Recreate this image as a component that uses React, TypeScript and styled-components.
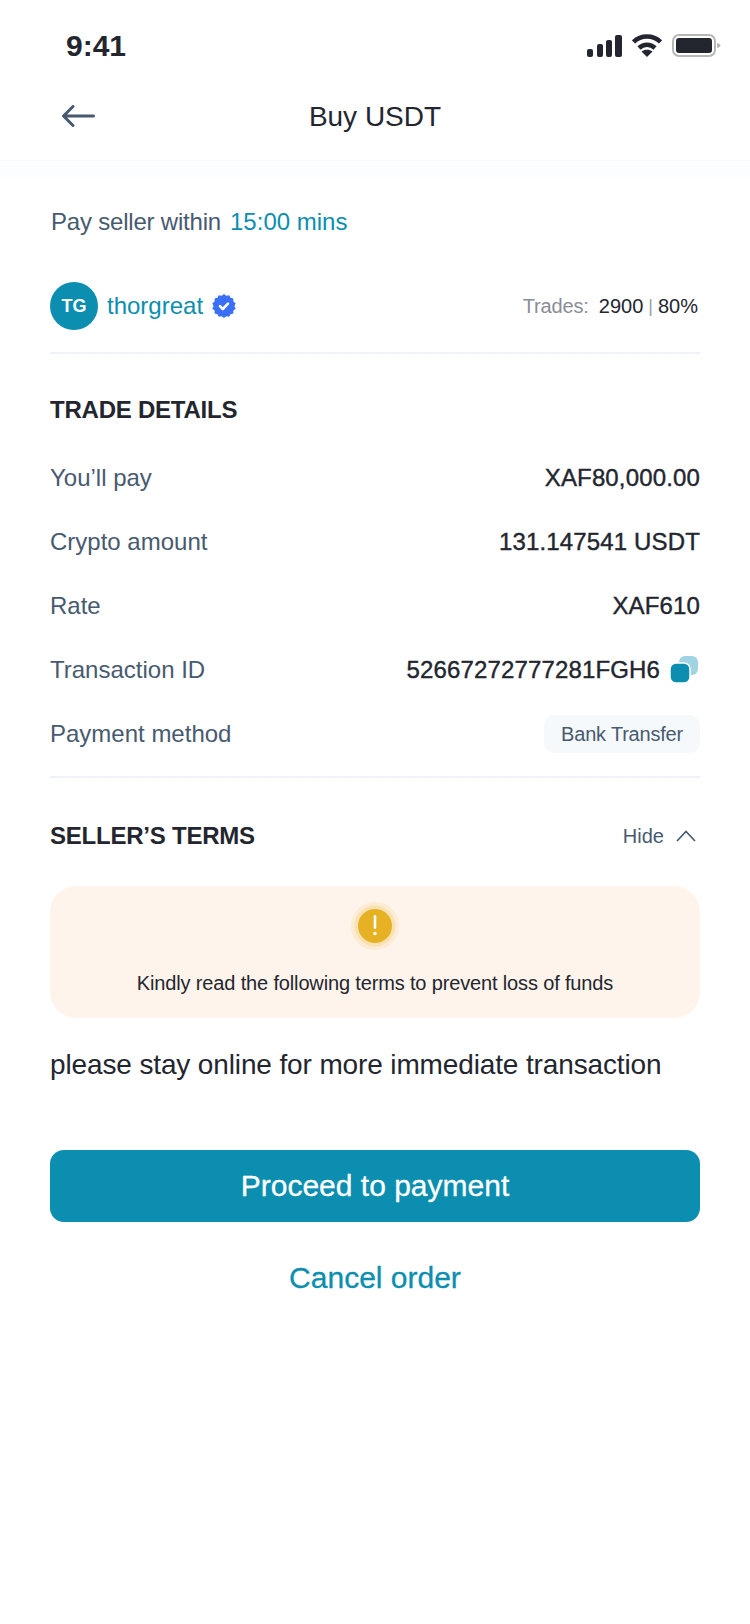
import React from "react";
import styled, {createGlobalStyle} from "styled-components";

const teal = "#0b8eaf";
const ink = "#23262f";
const slate = "#475a70";

const GlobalStyle = createGlobalStyle`
    html, body {
        margin: 0;
        padding: 0;
        background: #fff;
    }

    body {
        font-family: "Liberation Sans", Arial, sans-serif;
        color: ${ink};
    }
`;

const Page = styled.div`
    width: 750px;
    height: 1624px;
    overflow: hidden;
    background: #fff;
`;

const StatusBar = styled.div`
    display: flex;
    align-items: center;
    justify-content: space-between;
    height: 72px;
    padding: 20px 29px 0 66px;
    box-sizing: border-box;
`;

const Clock = styled.span`
    font-size: 30px;
    font-weight: 700;
`;

const StatusIcons = styled.div`
    display: flex;
    align-items: flex-end;
    gap: 10px;
    margin-bottom: 2px;
`;

const NavBar = styled.div`
    display: grid;
    grid-template-columns: 1fr auto 1fr;
    align-items: center;
    height: 88px;
    padding-left: 62px;
`;

const Title = styled.h1`
    margin: 2px 0 0 -62px;
    font-size: 28px;
    font-weight: 400;
`;

const NavBand = styled.div`
    height: 17px;
    background: #fcfdfe;
    border-top: 1px solid #f4f7fb;
    box-sizing: border-box;
`;

const Content = styled.main`
    padding: 0 50px;
`;

const Timer = styled.div`
    display: flex;
    gap: 9px;
    align-items: center;
    height: 44px;
    margin-top: 23px;
    padding-left: 1px;
    font-size: 24px;
    letter-spacing: -0.2px;
    color: ${slate};
`;

const TimerValue = styled.span`
    color: ${teal};
    letter-spacing: 0;
`;

const SellerRow = styled.div`
    display: flex;
    align-items: center;
    justify-content: space-between;
    margin-top: 38px;
    padding-bottom: 22px;
    border-bottom: 2px solid #eef2f6;
`;

const Seller = styled.div`
    display: flex;
    align-items: center;
`;

const Avatar = styled.div`
    display: flex;
    align-items: center;
    justify-content: center;
    width: 48px;
    height: 48px;
    border-radius: 50%;
    background: ${teal};
    color: #fff;
    font-size: 18px;
    font-weight: 700;
`;

const SellerName = styled.span`
    margin: 0 9px 0 9px;
    font-size: 24px;
    color: ${teal};
`;

const TradeStats = styled.div`
    display: flex;
    align-items: center;
    padding-right: 2px;
    font-size: 20px;
`;

const TradesLabel = styled.span`
    margin-right: 10px;
    color: #8a8d96;
    letter-spacing: -0.15px;
`;

const StatsSeparator = styled.span`
    margin: 0 5px;
    color: #9a9da5;
    font-size: 18px;
`;

const SectionHeading = styled.h2`
    margin: 0;
    font-size: 24px;
    line-height: 30px;
    font-weight: 700;
    letter-spacing: -0.23px;
`;

const DetailsHeading = styled(SectionHeading)`
    margin-top: 41px;
`;

const Details = styled.div`
    margin-top: 21px;
    padding-bottom: 10px;
    border-bottom: 2px solid #eef2f6;
`;

const DetailRow = styled.div`
    display: flex;
    align-items: center;
    justify-content: space-between;
    height: 64px;
    font-size: 24px;
`;

const DetailLabel = styled.span`
    color: ${slate};
`;

const DetailValue = styled.span`
    display: flex;
    align-items: center;
    gap: 10px;
    letter-spacing: 0.15px;
    -webkit-text-stroke: 0.4px ${ink};
`;

const MethodChip = styled.span`
    display: flex;
    align-items: center;
    height: 38px;
    padding: 0 17px;
    border-radius: 10px;
    background: #f6f9fc;
    color: ${slate};
    font-size: 20px;
    letter-spacing: -0.2px;
`;

const TermsHeader = styled.div`
    display: flex;
    align-items: center;
    justify-content: space-between;
    margin-top: 43px;
`;

const HideToggle = styled.span`
    display: flex;
    align-items: center;
    gap: 12px;
    padding-right: 4px;
    color: ${slate};
    font-size: 20px;
`;

const WarningBox = styled.div`
    display: flex;
    flex-direction: column;
    align-items: center;
    height: 132px;
    margin-top: 35px;
    padding-top: 16px;
    box-sizing: border-box;
    border-radius: 26px;
    background: #fff4eb;
`;

const WarningText = styled.p`
    margin: 19px 0 0;
    font-size: 20px;
    line-height: 28px;
    letter-spacing: -0.15px;
`;

const TermsText = styled.p`
    margin: 29px 0 0;
    font-size: 28px;
    line-height: 36px;
    letter-spacing: -0.13px;
`;

const PrimaryButton = styled.button`
    display: block;
    width: 100%;
    height: 72px;
    margin-top: 67px;
    border: 0;
    border-radius: 14px;
    background: ${teal};
    color: #fff;
    font: inherit;
    font-size: 30px;
    -webkit-text-stroke: 0.3px #fff;
`;

const CancelButton = styled.button`
    display: block;
    width: 100%;
    height: 40px;
    margin-top: 36px;
    padding: 0;
    border: 0;
    background: none;
    color: ${teal};
    font: inherit;
    font-size: 30px;
    -webkit-text-stroke: 0.3px ${teal};
`;

const CopyWrap = styled.span`
    display: flex;
    margin-right: 2px;
`;

const SignalIcon = () => (
    <svg width="35" height="22" viewBox="0 0 35 22" fill={ink}>
        <rect x="0" y="14" width="6" height="8" rx="2"/>
        <rect x="10" y="9" width="6" height="13" rx="2"/>
        <rect x="19" y="5" width="6" height="17" rx="2"/>
        <rect x="28" y="0" width="7" height="22" rx="2"/>
    </svg>
);

const WifiIcon = () => (
    <svg width="30" height="23" viewBox="0 0 30 23" fill="none" stroke={ink} strokeWidth="4.500">
        <path d="M1.5 8C9 .8 21 .8 28.5 8"/>
        <path d="M7 14c4.500-4.300 11.500-4.300 16 0"/>
        <path d="M15 23l-5.500-5.500c3-2.500 8-2.500 11 0z" fill={ink} stroke="none"/>
    </svg>
);

const BatteryIcon = () => (
    <svg width="49" height="23" viewBox="0 0 49 23">
        <rect x="1" y="1" width="42" height="21" rx="6" fill="none" stroke="#b7b7b7" strokeWidth="2"/>
        <rect x="4" y="4" width="36" height="15" rx="3" fill={ink}/>
        <path d="M45 9c2 .5 3.500 1.300 3.500 2.500S47 13.500 45 14z" fill="#b7b7b7"/>
    </svg>
);

const BackIcon = () => (
    <svg width="33" height="22" viewBox="0 0 33 22" fill="none" stroke={slate} strokeWidth="3" strokeLinecap="round" strokeLinejoin="round">
        <path d="M11 1.500L1.500 11l9.500 9.500M2 11h29.500"/>
    </svg>
);

// scalloped edge of the verified badge
const badgeEdge = Array.from({length: 28}, (_, i) => {
    const angle = (i / 28) * Math.PI * 2;
    const radius = i % 2 === 0 ? 12 : 10.4;
    return `${(12 + radius * Math.sin(angle)).toFixed(2)},${(12 - radius * Math.cos(angle)).toFixed(2)}`;
}).join(" ");

const VerifiedIcon = () => (
    <svg width="24" height="24" viewBox="0 0 24 24">
        <polygon points={badgeEdge} fill="#3a6ff7"/>
        <path d="M8 12.200l2.800 2.800 5.200-5.400" fill="none" stroke="#fff" strokeWidth="2.600" strokeLinecap="round" strokeLinejoin="round"/>
    </svg>
);

const CopyIcon = () => (
    <svg width="28" height="28" viewBox="0 0 28 28">
        <rect x="9" y="0" width="19" height="19" rx="6" fill="#a0d4e2"/>
        <rect x="0" y="7" width="20" height="20" rx="6" fill={teal} stroke="#fff" strokeWidth="1.500"/>
    </svg>
);

const ChevronIcon = () => (
    <svg width="20" height="12" viewBox="0 0 20 12" fill="none" stroke={slate} strokeWidth="1.700">
        <path d="M1 11l9-9.500 9 9.500"/>
    </svg>
);

const AlertIcon = () => (
    <svg width="48" height="48" viewBox="0 0 48 48">
        <circle cx="24" cy="24" r="24" fill="#fbecd3"/>
        <circle cx="24" cy="24" r="20.500" fill="#f8e2b4"/>
        <circle cx="24" cy="24" r="17" fill="#e6b122"/>
        <rect x="22.700" y="13" width="2.600" height="14" rx="1.300" fill="#fff"/>
        <circle cx="24" cy="31.500" r="1.700" fill="#fff"/>
    </svg>
);

const details: {label: string; value: string; copy?: boolean}[] = [
    {label: "You’ll pay", value: "XAF80,000.00"},
    {label: "Crypto amount", value: "131.147541 USDT"},
    {label: "Rate", value: "XAF610"},
    {label: "Transaction ID", value: "52667272777281FGH6", copy: true},
];

const App: React.FC = () => {
    return <Page>
        <GlobalStyle/>
        <StatusBar>
            <Clock>9:41</Clock>
            <StatusIcons>
                <SignalIcon/>
                <WifiIcon/>
                <BatteryIcon/>
            </StatusIcons>
        </StatusBar>
        <NavBar>
            <BackIcon/>
            <Title>Buy USDT</Title>
        </NavBar>
        <NavBand/>
        <Content>
            <Timer>
                Pay seller within
                <TimerValue>15:00 mins</TimerValue>
            </Timer>
            <SellerRow>
                <Seller>
                    <Avatar>TG</Avatar>
                    <SellerName>thorgreat</SellerName>
                    <VerifiedIcon/>
                </Seller>
                <TradeStats>
                    <TradesLabel>Trades:</TradesLabel>
                    2900
                    <StatsSeparator>|</StatsSeparator>
                    80%
                </TradeStats>
            </SellerRow>
            <DetailsHeading>TRADE DETAILS</DetailsHeading>
            <Details>
                {details.map(row => <DetailRow key={row.label}>
                    <DetailLabel>{row.label}</DetailLabel>
                    <DetailValue>
                        {row.value}
                        {row.copy && <CopyWrap><CopyIcon/></CopyWrap>}
                    </DetailValue>
                </DetailRow>)}
                <DetailRow>
                    <DetailLabel>Payment method</DetailLabel>
                    <MethodChip>Bank Transfer</MethodChip>
                </DetailRow>
            </Details>
            <TermsHeader>
                <SectionHeading>SELLER’S TERMS</SectionHeading>
                <HideToggle>Hide <ChevronIcon/></HideToggle>
            </TermsHeader>
            <WarningBox>
                <AlertIcon/>
                <WarningText>Kindly read the following terms to prevent loss of funds</WarningText>
            </WarningBox>
            <TermsText>please stay online for more immediate transaction</TermsText>
            <PrimaryButton>Proceed to payment</PrimaryButton>
            <CancelButton>Cancel order</CancelButton>
        </Content>
    </Page>;
};

export default App;
